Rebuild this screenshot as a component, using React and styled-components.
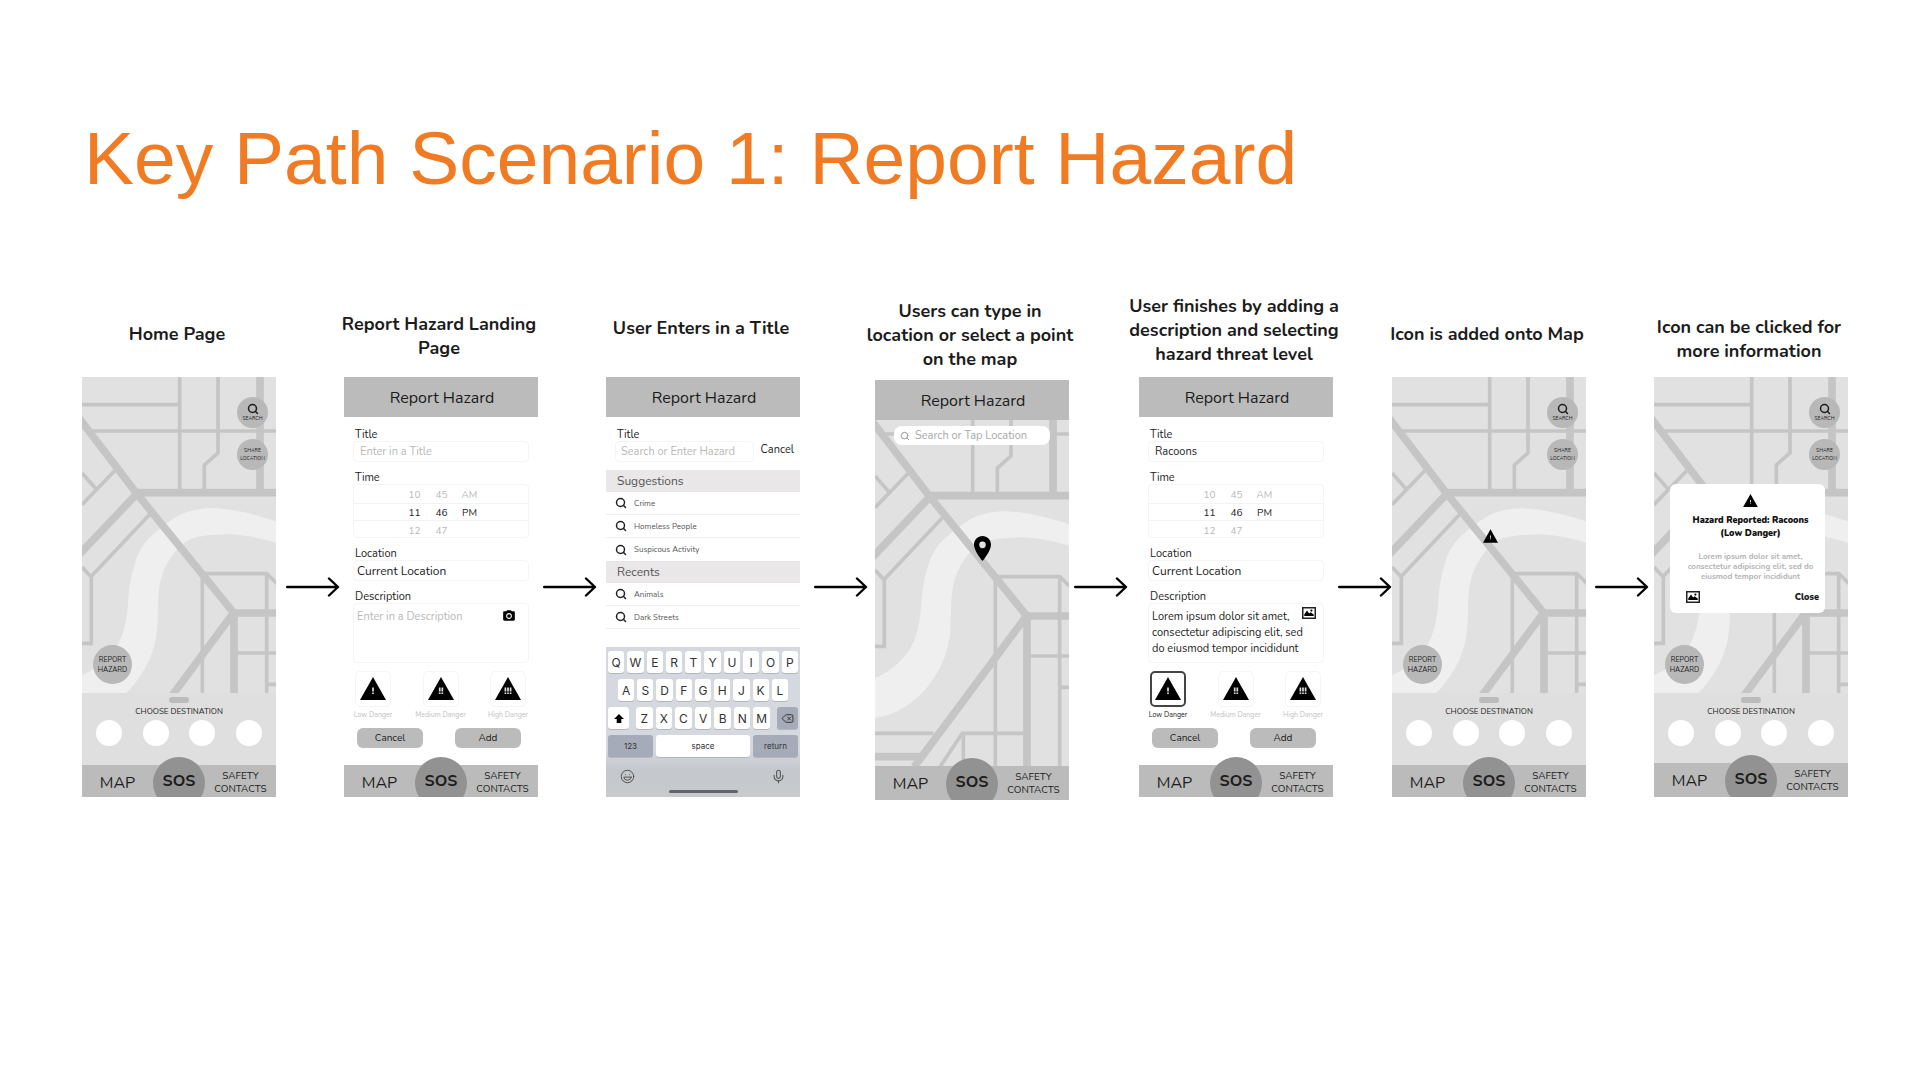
import React from "react";
import styled, { createGlobalStyle, css } from "styled-components";
import { Search, Delete, Laugh, Mic } from "lucide-react";
import { MdPhotoCamera } from "react-icons/md";

const GlobalStyle = createGlobalStyle`
  *, *::before, *::after { box-sizing: border-box; }
  body { margin: 0; background: #fff; }
  button, input, textarea { font: inherit; color: inherit; margin: 0; }
  button { border: 0; padding: 0; background: none; cursor: pointer; }
`;

const Page = styled.main`
  padding: 116px 72px 80px 82px;
  font-family: Nunito, Lato, "Noto Sans", sans-serif;
  color: #1c1c1c;
`;

const Title = styled.h1`
  margin: 0 0 89px 2px;
  font: 400 75px/84px "Liberation Sans", Arial, sans-serif;
  color: #f17b22;
`;

const Flow = styled.section`
  display: grid;
  grid-template-columns: 194fr 68fr 194fr 68fr 194fr 75fr 194fr 70fr 194fr 59fr 194fr 68fr 194fr;
`;

const Step = styled.article`
  min-width: 0;
  display: flex;
  flex-direction: column;
`;

const Caption = styled.h2`
  margin: 0 -12px 0 -16px;
  min-height: ${(p) => (p.$tall ? 91 : 88)}px;
  padding-bottom: ${(p) => p.$gap}px;
  display: flex;
  flex-direction: column;
  justify-content: flex-end;
  align-items: center;
  font-size: 18px;
  line-height: 24px;
  font-weight: 670;
  white-space: nowrap;
`;

const Connector = styled.div`
  padding: 88px 0 3px ${(p) => p.$inset}px;
  display: flex;
  align-items: center;
`;

const Phone = styled.div`
  min-height: 420px;
  display: flex;
  flex-direction: column;
  overflow: hidden;
  background: #fff;
`;

const Header = styled.header`
  height: 40px;
  flex: none;
  padding: 2px 0 0 2px;
  display: grid;
  place-items: center;
  background: #bbb;
  font-size: 16px;
`;

/* bottom navigation */
const Nav = styled.nav`
  height: ${(p) => (p.$tall ? 34 : 32)}px;
  flex: none;
  margin-top: auto;
  display: grid;
  grid-template-columns: 1fr 52px 1fr;
  grid-template-rows: 32px;
  background: #bbb;
`;

const NavButton = styled.button`
  padding: 4px 0 0;
  font-size: ${(p) => (p.$small ? 10 : 16)}px;
  line-height: 13px;
`;

const SosButton = styled.button`
  width: 52px;
  height: 52px;
  margin-top: -8px;
  padding-bottom: 4px;
  position: relative;
  border-radius: 50%;
  background: #929292;
  font-size: 16px;
  font-weight: 700;
`;

/* map */
const MapArea = styled.div`
  flex: 1;
  position: relative;
  overflow: hidden;
  display: grid;
`;

const MapDrawing = styled.svg`
  position: absolute;
  left: 0;
  top: ${(p) => (p.$underHeader ? -40 : 0)}px;
  width: 100%;
  height: 420px;
  display: block;
`;

const roundButton = css`
  position: absolute;
  border-radius: 50%;
  background: #b8b8b8;
  display: flex;
  flex-direction: column;
  align-items: center;
  justify-content: center;
`;

const MapTools = styled.div`
  position: absolute;
  top: 20px;
  right: 8px;
  display: grid;
  gap: 11px;
`;

const ToolButton = styled.button`
  ${roundButton}
  position: static;
  width: 31px;
  height: 31px;
  font-size: 5px;
  line-height: 8px;
`;

const ReportButton = styled.button`
  ${roundButton}
  left: 11px;
  bottom: 9px;
  width: 39px;
  height: 39px;
  font-size: 7px;
  line-height: 10px;
`;

const MapMarker = styled.div`
  position: absolute;
  left: 50%;
  top: ${(p) => p.$top}px;
  margin-left: ${(p) => p.$shift}px;
  line-height: 0;
`;

const Sheet = styled.section`
  height: ${(p) => (p.$short ? 70 : 72)}px;
  flex: none;
  padding: 4px 14px 0;
  display: flex;
  flex-direction: column;
  align-items: center;
  background: #dfdfdf;
`;

const Handle = styled.span`
  width: 20px;
  height: 6px;
  border-radius: 3px;
  background: #bbb;
`;

const SheetTitle = styled.h3`
  margin: 3px 0 2px;
  font-size: 8px;
  line-height: 12px;
  font-weight: 400;
`;

const Destinations = styled.div`
  width: 100%;
  display: flex;
  justify-content: space-between;
`;

const Destination = styled.button`
  width: 26px;
  height: 26px;
  border-radius: 50%;
  background: #fff;
`;

const MapSearch = styled.label`
  position: absolute;
  top: 6px;
  left: 19px;
  right: 19px;
  height: 19px;
  padding: 0 6px;
  display: flex;
  align-items: center;
  gap: 5px;
  border-radius: 8px;
  background: #fff;
  color: #999;
`;

const MapSearchInput = styled.input`
  flex: 1;
  min-width: 0;
  padding: 0;
  border: 0;
  outline: 0;
  background: none;
  font-size: 11px;
  line-height: 16px;
  &::placeholder { color: #a8a8a8; opacity: 1; }
`;

/* report form */
const Form = styled.form`
  padding-top: 10px;
  display: flex;
  flex-direction: column;
  gap: 8px;
`;

const Field = styled.div`
  padding: 0 9px;
  position: relative;
`;

const Label = styled.label`
  display: block;
  height: 14px;
  padding-left: 2px;
  font-size: 11px;
  line-height: 16px;
`;

const TextInput = styled.input`
  display: block;
  width: 100%;
  min-width: 0;
  height: 21px;
  padding: 0 ${(p) => (p.$tight ? 3 : 6)}px;
  border: 1px solid #f5f5f5;
  border-radius: 4px;
  outline: 0;
  background: #fff;
  font-size: ${(p) => (p.$tight ? 12 : 11)}px;
  &::placeholder { color: #b8b8b8; opacity: 1; }
`;

const TextBox = styled.textarea`
  display: block;
  width: 100%;
  height: 60px;
  padding: 5px 3px;
  border: 1px solid #f5f5f5;
  border-radius: 4px;
  outline: 0;
  resize: none;
  overflow: hidden;
  background: #fff;
  font-size: 11px;
  line-height: 16px;
  &::placeholder { color: #b8b8b8; opacity: 1; }
`;

const Attach = styled.button`
  position: absolute;
  top: ${(p) => (p.$photo ? 18 : 20)}px;
  right: ${(p) => (p.$photo ? 17 : 22)}px;
  line-height: 0;
`;

const TimePicker = styled.div`
  height: 54px;
  border: 1px solid #f5f5f5;
  border-radius: 4px;
`;

const TimeRow = styled.div`
  height: 18px;
  padding: 1px 0 0 47px;
  display: grid;
  grid-template-columns: 27px 27px 29px;
  place-items: center;
  font-size: 10px;
  color: ${(p) => (p.$active ? "#222" : "#b8b8b8")};
  border: solid #f3f3f3;
  border-width: ${(p) => (p.$active ? "1px 0" : "0")};
`;

const Levels = styled.div`
  padding: 0 3px 0 2px;
  display: flex;
  justify-content: space-between;
`;

const Level = styled.label`
  width: 54px;
  display: grid;
  justify-items: center;
  row-gap: 3px;
  font-size: 7px;
  line-height: 10px;
  white-space: nowrap;
  color: #c2c2c2;
  &:has(input:checked) { color: #222; }
  svg { grid-area: 1 / 1; align-self: center; margin-bottom: 2px; pointer-events: none; }
`;

const LevelRadio = styled.input`
  grid-area: 1 / 1;
  appearance: none;
  width: 36px;
  height: 36px;
  margin: 0;
  border: 1px solid #f5f5f5;
  border-radius: 5px;
  &:checked { border: 2px solid #444; }
`;

const Actions = styled.div`
  padding: 0 17px 0 13px;
  display: flex;
  justify-content: space-between;
`;

const ActionButton = styled.button`
  width: 66px;
  height: 20px;
  border-radius: 6px;
  background: #bbb;
  font-size: 10px;
`;

/* title search */
const SearchLine = styled.div`
  display: flex;
  align-items: center;
  justify-content: space-between;
  margin-right: -3px;
  ${TextInput} { width: 139px; padding: 0 5px; }
`;

const CancelButton = styled.button`
  padding-bottom: 3px;
  font-size: 11px;
  line-height: 16px;
`;

const Results = styled.div`
  margin-top: 8px;
`;

const GroupTitle = styled.h3`
  margin: 0;
  height: 22px;
  padding-left: 11px;
  background: #e9e7e8;
  font-size: 12px;
  line-height: 22px;
  font-weight: 400;
  color: #555;
`;

const Result = styled.button`
  width: 100%;
  height: 23px;
  padding-left: 9px;
  display: flex;
  align-items: center;
  gap: 7px;
  border-bottom: ${(p) => (p.$last ? "0" : "1px solid #efefef")};
  font-size: 8px;
  color: #555;
  svg { color: #222; }
`;

/* keyboard */
const Keyboard = styled.div`
  height: 150px;
  margin-top: auto;
  padding: 4px 2px 0;
  display: flex;
  flex-direction: column;
  gap: 6px;
  background: linear-gradient(#d6d8df 0 68%, #c4c7cc 82%, #c8cacd);
  font-family: Inter, "Liberation Sans", sans-serif;
`;

const KeyRow = styled.div`
  display: flex;
  gap: ${(p) => p.$gap || 3}px;
  padding: 0 ${(p) => p.$inset || 0}px;
`;

const Letters = styled.div`
  flex: 1;
  display: flex;
  gap: 3px;
`;

const Key = styled.button`
  flex: ${(p) => (p.$width ? "none" : "1")};
  width: ${(p) => (p.$width ? `${p.$width}px` : "auto")};
  min-width: 0;
  height: 22px;
  display: grid;
  place-items: center;
  border-radius: 3px;
  background: ${(p) => (p.$dark ? "#a5abb8" : "#fff")};
  box-shadow: 0 1px 0 #b4b6bb;
  font-size: ${(p) => (p.$word ? 8 : 12)}px;
  color: #333;
`;

const KeyboardFoot = styled.div`
  padding: 6px 12px 0;
  display: flex;
  justify-content: space-between;
  color: #555;
`;

const HomeBar = styled.span`
  width: 69px;
  height: 3px;
  margin: auto auto 4px;
  border-radius: 2px;
  background: #62656a;
`;

/* hazard popup */
const Popup = styled.section`
  position: absolute;
  top: 107px;
  left: 16px;
  right: 23px;
  height: 129px;
  padding: 10px 6px 10px 12px;
  display: flex;
  flex-direction: column;
  align-items: center;
  border-radius: 6px;
  background: #fff;
  text-align: center;
  white-space: nowrap;
`;

const PopupTitle = styled.h3`
  margin: 7px 0 0;
  font-size: 9px;
  line-height: 13px;
  font-weight: 900;
  color: #111;
`;

const PopupText = styled.p`
  margin: 12px 0 0;
  font-size: 8px;
  line-height: 10px;
  font-weight: 700;
  color: #b4b4b4;
`;

const PopupFoot = styled.div`
  width: 100%;
  margin-top: auto;
  padding-left: 4px;
  display: flex;
  justify-content: space-between;
  align-items: center;
`;

const CloseButton = styled.button`
  font-size: 9px;
  line-height: 12px;
  font-weight: 900;
`;

const Arrow = () => (
  <svg width="54" height="20" viewBox="0 0 54 20" fill="none" stroke="#000" strokeWidth="2.4" strokeLinecap="round" strokeLinejoin="round" aria-hidden="true">
    <path d="M1.2 10H51.500M43 1.500L52 10L43 18.500" />
  </svg>
);

const Hazard = ({ width = 26, height = 23, marks = 1 }) => (
  <svg width={width} height={height} viewBox="0 0 26 23" aria-hidden="true">
    <path d="M13 0L26 23H0Z" fill="#000" />
    {Array.from({ length: marks }, (_, i) => {
      const x = 13 + (i - (marks - 1) / 2) * 2.6;
      return <path key={i} d={`M${x} 10.500v4M${x} 15.600v1.500`} stroke="#ddd" strokeWidth="1.700" />;
    })}
  </svg>
);

const Photo = () => (
  <svg width="14" height="12" viewBox="0 0 14 12" aria-hidden="true">
    <rect x="0.75" y="0.75" width="12.500" height="10.500" fill="#fff" stroke="#222" strokeWidth="1.500" />
    <path d="M2.300 9V7.200L5 3.600L7.200 6.400L8.600 5.200L11.700 7.600V9Z" fill="#000" />
    <circle cx="9.400" cy="3.600" r="1.100" fill="#000" />
  </svg>
);

const Pin = () => (
  <svg width="17" height="25" viewBox="5 2 14 20" preserveAspectRatio="none" aria-hidden="true">
    <path fill="#000" fillRule="evenodd" d="M12 2C8.130 2 5 5.130 5 9c0 5.250 7 13 7 13s7-7.750 7-13c0-3.870-3.130-7-7-7zm0 9.700a2.700 2.700 0 1 1 0-5.400 2.700 2.700 0 0 1 0 5.400z" />
  </svg>
);

const Shift = () => (
  <svg width="10" height="9" viewBox="0 0 10 9" aria-hidden="true">
    <path d="M5 0L10 5H7.300V9H2.700V5H0Z" fill="#000" />
  </svg>
);

const CityMap = ({ underHeader }) => (
  <MapDrawing $underHeader={underHeader} viewBox="0 0 582 1260" preserveAspectRatio="none" aria-hidden="true">
    <rect width="582" height="1260" fill="#e1e1e1" />
    <path
      fill="#efefef"
      d="M582 433C520 412 450 394 385 394C320 396 285 415 255 439C205 475 180 500 165 540C148 590 142 625 139 670C136 715 132 745 118 780C98 830 50 875 0 894V1014C60 1005 105 975 145 935C195 880 218 820 224 769C230 720 226 690 230 649C234 610 240 590 255 560C275 525 300 495 335 483C365 475 405 472 445 472C495 474 540 485 582 497Z"
    />
    <g fill="none" stroke="#c5c5c5" strokeWidth="11">
      <path d="M0 83H293M293 0V340M24 162H582M408 0V228L367 264V340" />
      <path d="M98 281L0 383M0 288L42 336M205 410L28 598M0 570L28 600V799H0" />
      <path d="M361 1160V590H554L586 620M554 590V1160M456 828H582M554 922H582" />
      <path d="M0 1060H175M445 1060H262L195 1160M265 1060V1160" />
      <g strokeWidth="23">
        <path d="M534 0V346M162 347H582M-10 122L162 347L454 706M165 350L-8 532" />
        <path d="M454 708H582M456 700V1170M456 706L118 1160M0 1130H140" />
      </g>
    </g>
  </MapDrawing>
);

const BottomNav = ({ tall }) => (
  <Nav $tall={tall}>
    <NavButton type="button">MAP</NavButton>
    <SosButton type="button">SOS</SosButton>
    <NavButton type="button" $small>
      SAFETY
      <br />
      CONTACTS
    </NavButton>
  </Nav>
);

const HomeScreen = ({ children, tallNav }) => (
  <Phone>
    <MapArea>
      <CityMap />
      <MapTools>
        <ToolButton type="button">
          <Search size={12} strokeWidth={3} />
          SEARCH
        </ToolButton>
        <ToolButton type="button">
          <span>SHARE</span>
          <span>LOCATION</span>
        </ToolButton>
      </MapTools>
      <ReportButton type="button">
        <span>REPORT</span>
        <span>HAZARD</span>
      </ReportButton>
      {children}
    </MapArea>
    <Sheet $short={tallNav}>
      <Handle />
      <SheetTitle>CHOOSE DESTINATION</SheetTitle>
      <Destinations>
        {[1, 2, 3, 4].map((n) => (
          <Destination key={n} type="button" aria-label={`Destination ${n}`} />
        ))}
      </Destinations>
    </Sheet>
    <BottomNav tall={tallNav} />
  </Phone>
);

const TIMES = [
  ["10", "45", "AM"],
  ["11", "46", "PM"],
  ["12", "47", ""],
];

const LEVELS = ["Low Danger", "Medium Danger", "High Danger"];

const FormScreen = ({ id, title, description, level }) => (
  <Phone>
    <Header>Report Hazard</Header>
    <Form>
      <Field>
        <Label htmlFor={`${id}-title`}>Title</Label>
        <TextInput id={`${id}-title`} placeholder="Enter in a Title" defaultValue={title} />
      </Field>
      <Field>
        <Label as="div" id={`${id}-time`}>Time</Label>
        <TimePicker role="group" aria-labelledby={`${id}-time`}>
          {TIMES.map((row, i) => (
            <TimeRow key={row[0]} $active={i === 1}>
              {row.map((cell, j) => (
                <span key={j}>{cell}</span>
              ))}
            </TimeRow>
          ))}
        </TimePicker>
      </Field>
      <Field>
        <Label htmlFor={`${id}-location`}>Location</Label>
        <TextInput id={`${id}-location`} $tight defaultValue="Current Location" />
      </Field>
      <Field>
        <Label htmlFor={`${id}-description`}>Description</Label>
        <TextBox id={`${id}-description`} placeholder="Enter in a Description" defaultValue={description} />
        <Attach type="button" aria-label="Add a photo" $photo={Boolean(description)}>
          {description ? <Photo /> : <MdPhotoCamera size={14} color="#000" />}
        </Attach>
      </Field>
      <Levels>
        {LEVELS.map((name, i) => (
          <Level key={name}>
            <LevelRadio type="radio" name={`${id}-level`} defaultChecked={level === i} />
            <Hazard marks={i + 1} />
            {name}
          </Level>
        ))}
      </Levels>
      <Actions>
        <ActionButton type="button">Cancel</ActionButton>
        <ActionButton type="button">Add</ActionButton>
      </Actions>
    </Form>
    <BottomNav />
  </Phone>
);

const GROUPS = [
  { name: "Suggestions", items: ["Crime", "Homeless People", "Suspicous Activity"] },
  { name: "Recents", items: ["Animals", "Dark Streets"] },
];

const letterKeys = (letters) => letters.split("").map((l) => <Key key={l} type="button">{l}</Key>);

const TitleScreen = () => (
  <Phone>
    <Header>Report Hazard</Header>
    <Form as="div">
      <Field>
        <Label htmlFor="search-title">Title</Label>
        <SearchLine>
          <TextInput id="search-title" placeholder="Search or Enter Hazard" />
          <CancelButton type="button">Cancel</CancelButton>
        </SearchLine>
      </Field>
    </Form>
    <Results>
      {GROUPS.map((group, g) => (
        <React.Fragment key={group.name}>
          <GroupTitle>{group.name}</GroupTitle>
          {group.items.map((item, i) => (
            <Result key={item} type="button" $last={g === 0 && i === group.items.length - 1}>
              <Search size={12} strokeWidth={3} />
              {item}
            </Result>
          ))}
        </React.Fragment>
      ))}
    </Results>
    <Keyboard>
      <KeyRow>{letterKeys("QWERTYUIOP")}</KeyRow>
      <KeyRow $inset={10}>{letterKeys("ASDFGHJKL")}</KeyRow>
      <KeyRow $gap={7}>
        <Key type="button" $width={21} aria-label="Shift"><Shift /></Key>
        <Letters>{letterKeys("ZXCVBNM")}</Letters>
        <Key type="button" $width={21} $dark aria-label="Backspace"><Delete size={13} strokeWidth={1.8} /></Key>
      </KeyRow>
      <KeyRow>
        <Key type="button" $width={45} $dark $word>123</Key>
        <Key type="button" $word>space</Key>
        <Key type="button" $width={45} $dark $word>return</Key>
      </KeyRow>
      <KeyboardFoot>
        <Laugh size={15} strokeWidth={1.6} />
        <Mic size={15} strokeWidth={1.8} />
      </KeyboardFoot>
      <HomeBar />
    </Keyboard>
  </Phone>
);

const LocationScreen = () => (
  <Phone>
    <Header>Report Hazard</Header>
    <MapArea>
      <CityMap underHeader />
      <MapSearch>
        <Search size={10} strokeWidth={2.4} />
        <MapSearchInput aria-label="Location" placeholder="Search or Tap Location" />
      </MapSearch>
      <MapMarker $top={116} $shift={2}><Pin /></MapMarker>
    </MapArea>
    <BottomNav tall />
  </Phone>
);

const HazardPopup = () => (
  <Popup>
    <Hazard width={15} height={13} />
    <PopupTitle>
      Hazard Reported: Racoons
      <br />
      (Low Danger)
    </PopupTitle>
    <PopupText>
      Lorem ipsum dolor sit amet,
      <br />
      consectetur adipiscing elit, sed do
      <br />
      eiusmod tempor incididunt
    </PopupText>
    <PopupFoot>
      <Photo />
      <CloseButton type="button">Close</CloseButton>
    </PopupFoot>
  </Popup>
);

const DESCRIPTION = "Lorem ipsum dolor sit amet,\nconsectetur adipiscing elit, sed\ndo eiusmod tempor incididunt";

const STEPS = [
  { caption: ["Home Page"], gap: 31, screen: <HomeScreen />, arrow: 10 },
  { caption: ["Report Hazard Landing", "Page"], gap: 17, screen: <FormScreen id="landing" />, arrow: 5 },
  { caption: ["User Enters in a Title"], gap: 37, screen: <TitleScreen />, arrow: 14 },
  { caption: ["Users can type in", "location or select a point", "on the map"], gap: 9, tall: true, screen: <LocationScreen />, arrow: 5 },
  {
    caption: ["User finishes by adding a", "description and selecting", "hazard threat level"],
    gap: 11,
    screen: <FormScreen id="filled" title="Racoons" description={DESCRIPTION} level={0} />,
    arrow: 5,
  },
  {
    caption: ["Icon is added onto Map"],
    gap: 31,
    screen: (
      <HomeScreen>
        <MapMarker $top={152} $shift={-6}><Hazard width={15} height={14} /></MapMarker>
      </HomeScreen>
    ),
    arrow: 9,
  },
  { caption: ["Icon can be clicked for", "more information"], gap: 14, screen: <HomeScreen tallNav><HazardPopup /></HomeScreen> },
];

export default function App() {
  return (
    <Page>
      <GlobalStyle />
      <Title>Key Path Scenario 1: Report Hazard</Title>
      <Flow>
        {STEPS.map((step) => (
          <React.Fragment key={step.caption[0]}>
            <Step>
              <Caption $gap={step.gap} $tall={step.tall}>
                {step.caption.map((line) => (
                  <span key={line}>{line}</span>
                ))}
              </Caption>
              {step.screen}
            </Step>
            {step.arrow && (
              <Connector $inset={step.arrow}>
                <Arrow />
              </Connector>
            )}
          </React.Fragment>
        ))}
      </Flow>
    </Page>
  );
}
